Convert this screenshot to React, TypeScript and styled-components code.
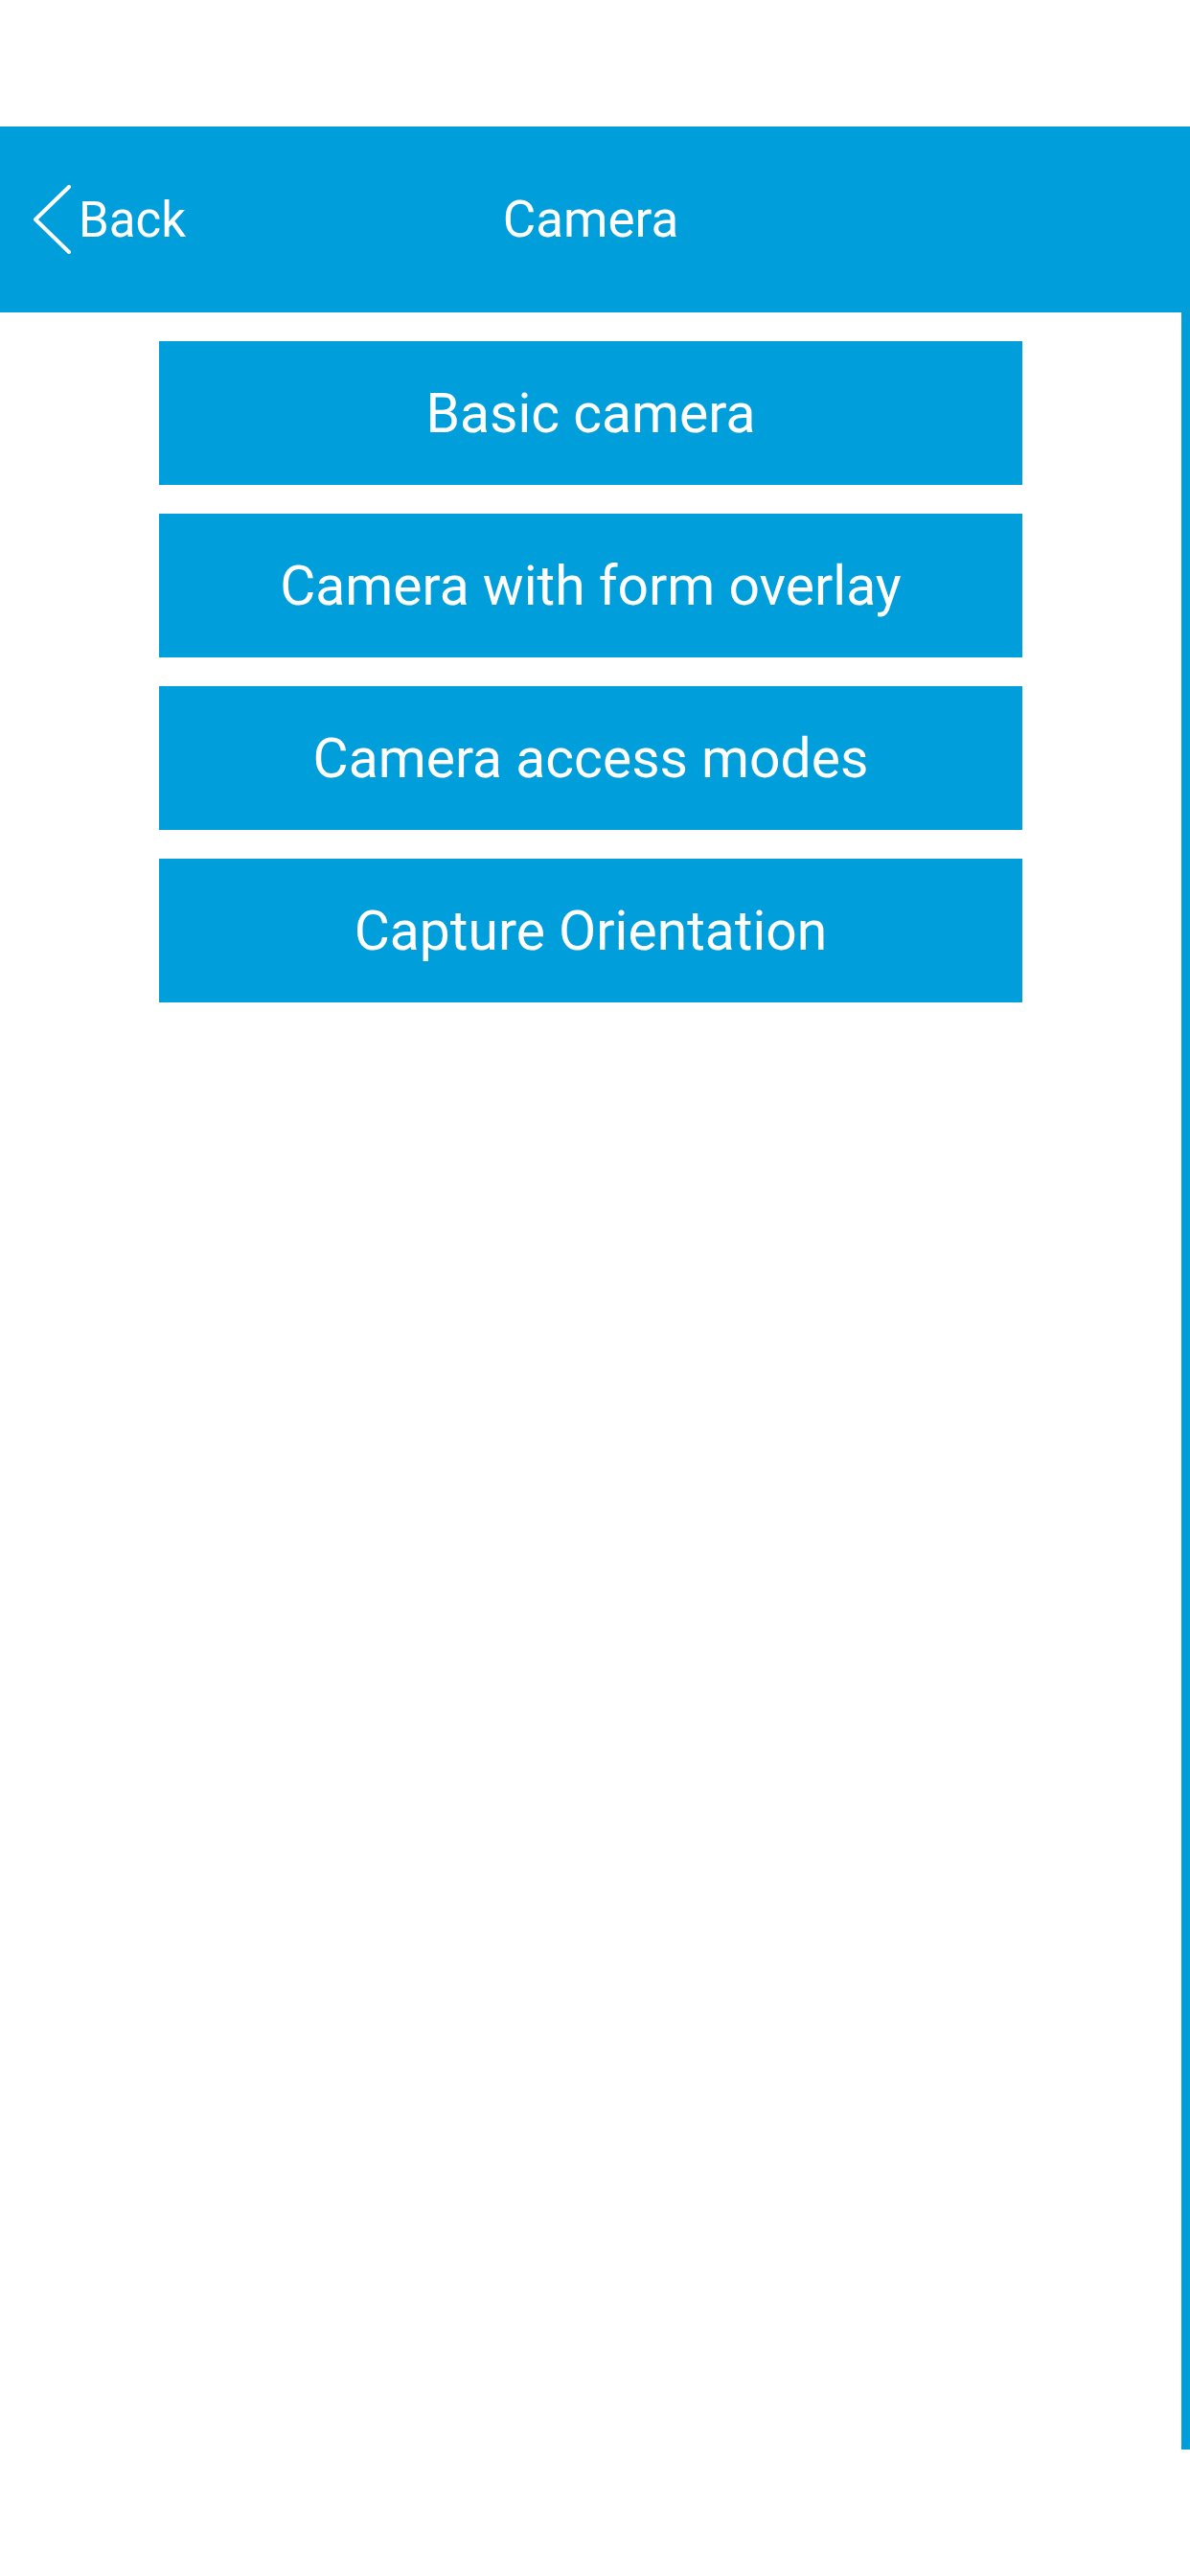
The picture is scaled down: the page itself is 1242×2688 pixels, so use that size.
import styled, { createGlobalStyle } from 'styled-components';

const brand = '#009fdb';

const GlobalStyle = createGlobalStyle`
  html, body {
    margin: 0;
    padding: 0;
    background: #ffffff;
    font-family: Roboto, "Noto Sans", "Liberation Sans", sans-serif;
  }
`;

const Screen = styled.div`
  width: 1242px;
  min-height: 2688px;
  padding-top: 132px;
  box-sizing: border-box;
  background: #ffffff;
`;

const NavBar = styled.header`
  height: 194px;
  padding-right: 9px;
  background: ${brand};
  display: grid;
  grid-template-columns: 1fr auto 1fr;
  align-items: center;
  color: #ffffff;
`;

const BackButton = styled.button`
  justify-self: start;
  display: flex;
  align-items: center;
  gap: 6px;
  margin: 0;
  padding: 0 0 0 34px;
  border: 0;
  background: none;
  color: #ffffff;
  font-family: inherit;
  font-size: 51px;
  cursor: pointer;
`;

const Title = styled.h1`
  margin: 0;
  font-size: 53px;
  font-weight: 400;
`;

const Body = styled.div`
  display: flex;
  align-items: flex-start;
`;

const Menu = styled.nav`
  flex: 1;
  display: flex;
  flex-direction: column;
  align-items: center;
  gap: 30px;
  padding-top: 30px;
`;

const MenuButton = styled.button`
  width: 901px;
  height: 150px;
  margin: 0;
  border: 0;
  background: ${brand};
  color: #ffffff;
  font-family: inherit;
  font-size: 57px;
  font-weight: 400;
  cursor: pointer;
`;

const ScrollTrack = styled.div`
  width: 9px;
  height: 2230px;
  background: ${brand};
`;

const items = ['Basic camera', 'Camera with form overlay', 'Camera access modes', 'Capture Orientation'];

const App = () => (
  <>
    <GlobalStyle />
    <Screen>
      <NavBar>
        <BackButton>
          <svg width="42" height="72" viewBox="0 0 42 72" fill="none">
            <path d="M38 2 L3 36 L38 70" stroke="#fff" strokeWidth="4" strokeLinecap="round" strokeLinejoin="round" />
          </svg>
          Back
        </BackButton>
        <Title>Camera</Title>
        <div />
      </NavBar>
      <Body>
        <Menu>
          {items.map((item) => (
            <MenuButton key={item}>{item}</MenuButton>
          ))}
        </Menu>
        <ScrollTrack />
      </Body>
    </Screen>
  </>
);

export default App;
